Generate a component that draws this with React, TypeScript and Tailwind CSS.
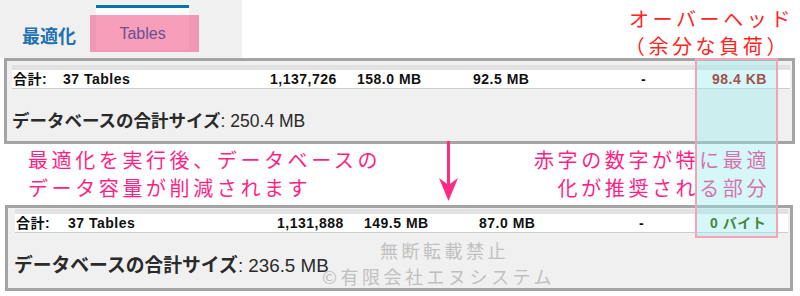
const jp = '"Noto Sans CJK JP", sans-serif';
const ui = '"Liberation Sans", "Noto Sans CJK JP", sans-serif';

interface Row {
  cells: { text: string; w: string; color?: string }[];
}

const ROW1: Row = {
  cells: [
    { text: '合計:', w: 'w-[50px]' },
    { text: '37 Tables', w: 'w-[207px]' },
    { text: '1,137,726', w: 'w-[87px]' },
    { text: '158.0 MB', w: 'w-[116px]' },
    { text: '92.5 MB', w: 'w-[168px]' },
    { text: '-', w: 'w-[71px]' },
    { text: '98.4 KB', w: 'w-[60px]', color: 'relative z-10 text-[#a35050]' },
  ],
};

const ROW2: Row = {
  cells: [
    { text: '合計:', w: 'w-[52px]' },
    { text: '37 Tables', w: 'w-[209px]' },
    { text: '1,131,888', w: 'w-[87px]' },
    { text: '149.5 MB', w: 'w-[115px]' },
    { text: '87.0 MB', w: 'w-[160px]' },
    { text: '-', w: 'w-[71px]' },
    { text: '0 バイト', w: 'w-[62px]', color: 'relative z-10 text-[#4b8540]' },
  ],
};

function SummaryPanel({ row, total, outer, inner, stripTop, textCls }: {
  row: Row;
  total: string;
  outer: string;
  inner: string;
  stripTop: string;
  textCls: string;
}) {
  return (
    <div className={`border-[3px] border-[#a4a4a4] bg-[#f0f0f0] ${outer}`}>
      <div className={`${inner} ${stripTop}`}>
        <div className="h-[5px] bg-[#e1e1e1]" />
        <div
          className="h-[19px] bg-white flex items-center pl-[1px] text-[14px] font-bold tracking-[0.5px] text-[#111] border-b border-[#cdcdcd]"
          style={{ fontFamily: ui }}
        >
          {row.cells.map((c, i) => (
            <span key={i} className={`${c.w} shrink-0 whitespace-nowrap ${c.color ?? ''}`}>
              {c.text}
            </span>
          ))}
        </div>
      </div>
      <div className={`leading-[24px] text-[#2a2a2a] ${textCls}`} style={{ fontFamily: ui }}>
        <span className="font-bold" style={{ fontFamily: jp }}>データベースの合計サイズ</span>
        <span>: {total}</span>
      </div>
    </div>
  );
}

export default function App() {
  return (
    <div className="relative w-[800px] h-[296px] bg-white overflow-hidden">
      {/* header: tabs + overhead note */}
      <div className="flex h-[58px]">
        <div className="w-[242px] bg-[#f0f0f0] flex items-start pl-[22px] pt-[5px]">
          <span
            className="mt-[18px] text-[18px] leading-[24px] font-bold text-[#2271b1]"
            style={{ fontFamily: jp }}
          >
            最適化
          </span>
          <div
            className="ml-[20px] w-[93px] h-[45px] bg-white border-t-[3px] border-[#0073aa] flex items-center justify-center pt-[10px] text-[16px] text-[#6a4f92]"
            style={{ fontFamily: ui }}
          >
            <span className="relative z-10">Tables</span>
          </div>
        </div>
        <div
          className="flex-1 flex flex-col items-end pr-[6px] pt-[5px] text-[20px] leading-[27px] tracking-[3.6px] text-[#ff2424]"
          style={{ fontFamily: jp }}
        >
          <span>オーバーヘッド</span>
          <span className="mr-[4px]">（余分な負荷）</span>
        </div>
      </div>

      <SummaryPanel
        row={ROW1}
        total="250.4 MB"
        outer="ml-[4px] w-[791px] h-[86px]"
        inner="pl-[5px] pr-[2px]"
        stripTop="pt-[4px]"
        textCls="mt-[19px] pl-[5px] text-[17.5px]"
      />

      {/* middle notes */}
      <div
        className="relative h-[61px] flex justify-between pl-[28px] pr-[30px] pt-[2px] text-[20px] leading-[28px] tracking-[3.6px] text-[#ff1f86]"
        style={{ fontFamily: jp }}
      >
        <div className="flex flex-col">
          <span>最適化を実行後、データベースの</span>
          <span>データ容量が削減されます</span>
        </div>
        <div className="flex flex-col items-end">
          <span>赤字の数字が特に最適</span>
          <span>化が推奨される部分</span>
        </div>
        <svg className="absolute left-[438px] top-[-3px]" width="20" height="62" viewBox="0 0 20 62">
          <rect x="9" y="0" width="3" height="50" fill="#ff2a82" />
          <path d="M10.5 60 L1 37 L10.5 44 L20 37 Z" fill="#ff2a82" />
        </svg>
      </div>

      <SummaryPanel
        row={ROW2}
        total="236.5 MB"
        outer="ml-[5px] w-[788px] h-[86px]"
        inner="pl-[7px] pr-[2px]"
        stripTop="pt-[1px]"
        textCls="mt-[19px] pl-[6px] text-[18.8px]"
      />

      {/* overlays */}
      <div className="absolute left-[90px] top-[15px] w-[109px] h-[37px] bg-[rgba(240,80,130,0.55)]" />
      <div className="absolute left-[695px] top-[58px] w-[83px] h-[180px] border-2 border-[#f4a3b5] bg-[rgba(150,235,235,0.4)]" />
      <div
        className="absolute left-[322px] top-[237px] flex flex-col items-center text-[18px] leading-[26px] tracking-[3.5px] text-[#c0c0c0]"
        style={{ fontFamily: jp }}
      >
        <span className="ml-[12px]">無断転載禁止</span>
        <span>©有限会社エヌシステム</span>
      </div>
    </div>
  );
}
